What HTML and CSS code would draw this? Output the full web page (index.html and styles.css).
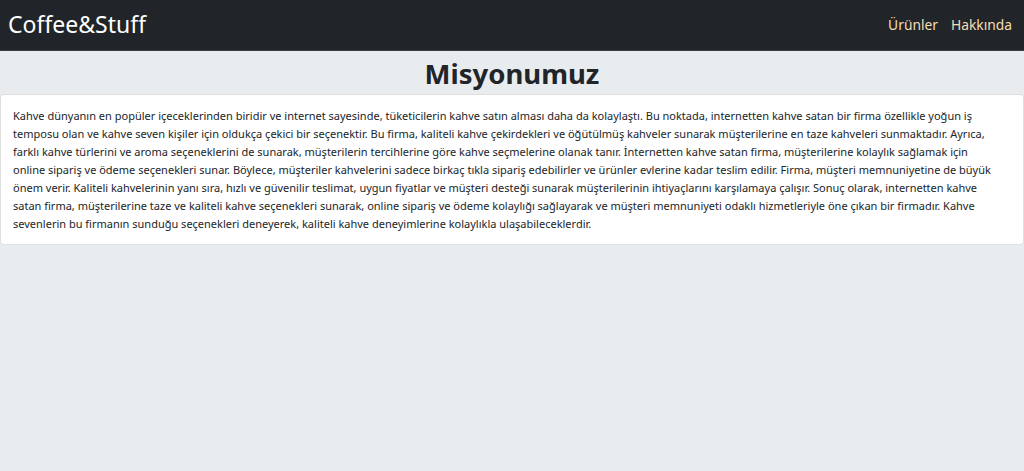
FILE: index.html
```html
<!DOCTYPE html>
<html lang="tr">
<head>
<meta charset="utf-8">
<title>Coffee&amp;Stuff</title>
<link rel="stylesheet" href="styles.css">
</head>
<body>
<nav class="navbar">
  <a class="brand" href="#">Coffee&amp;Stuff</a>
  <div class="nav-links">
    <a href="#">Ürünler</a>
    <a href="#">Hakkında</a>
  </div>
</nav>
<main class="content">
  <h1 class="title">Misyonumuz</h1>
  <div class="card">
    <p class="card-text">Kahve dünyanın en popüler içeceklerinden biridir ve internet sayesinde, tüketicilerin kahve satın alması daha da kolaylaştı. Bu noktada, internetten kahve satan bir firma özellikle yoğun iş<br>
temposu olan ve kahve seven kişiler için oldukça çekici bir seçenektir. Bu firma, kaliteli kahve çekirdekleri ve öğütülmüş kahveler sunarak müşterilerine en taze kahveleri sunmaktadır. Ayrıca,<br>
farklı kahve türlerini ve aroma seçeneklerini de sunarak, müşterilerin tercihlerine göre kahve seçmelerine olanak tanır. İnternetten kahve satan firma, müşterilerine kolaylık sağlamak için<br>
online sipariş ve ödeme seçenekleri sunar. Böylece, müşteriler kahvelerini sadece birkaç tıkla sipariş edebilirler ve ürünler evlerine kadar teslim edilir. Firma, müşteri memnuniyetine de büyük<br>
önem verir. Kaliteli kahvelerinin yanı sıra, hızlı ve güvenilir teslimat, uygun fiyatlar ve müşteri desteği sunarak müşterilerinin ihtiyaçlarını karşılamaya çalışır. Sonuç olarak, internetten kahve<br>
satan firma, müşterilerine taze ve kaliteli kahve seçenekleri sunarak, online sipariş ve ödeme kolaylığı sağlayarak ve müşteri memnuniyeti odaklı hizmetleriyle öne çıkan bir firmadır. Kahve<br>
sevenlerin bu firmanın sunduğu seçenekleri deneyerek, kaliteli kahve deneyimlerine kolaylıkla ulaşabileceklerdir.</p>
  </div>
</main>
</body>
</html>
```

FILE: styles.css
```css
html, body {
  margin: 0;
  padding: 0;
}
body {
  background: #e9ecef;
  font-family: "Noto Sans", "Open Sans", sans-serif;
  color: #212529;
  height: 471px;
}
.navbar {
  height: 51px;
  box-sizing: border-box;
  background: #212529;
  border-bottom: 1px solid #3a3d41;
  display: flex;
  align-items: center;
  justify-content: space-between;
  padding: 0 12px 0 8px;
}
.brand {
  color: #fff;
  text-decoration: none;
  font-size: 23px;
  line-height: 1;
  margin-top: -2px;
}
.nav-links {
  display: flex;
  gap: 13px;
}
.nav-links a {
  color: #f5deb3;
  text-decoration: none;
  font-size: 13.8px;
  margin-top: -2px;
}
.content {
  display: flex;
  flex-direction: column;
}
.title {
  margin: 2px 0 0;
  text-align: center;
  font-size: 27.5px;
  font-weight: 700;
  line-height: 41px;
}
.card {
  background: #fff;
  border: 1px solid rgba(0, 0, 0, 0.125);
  border-radius: 4px;
  padding: 12px 8px 11px 12px;
}
.card-text {
  margin: 0;
  font-size: 11px;
  line-height: 18px;
}
```
